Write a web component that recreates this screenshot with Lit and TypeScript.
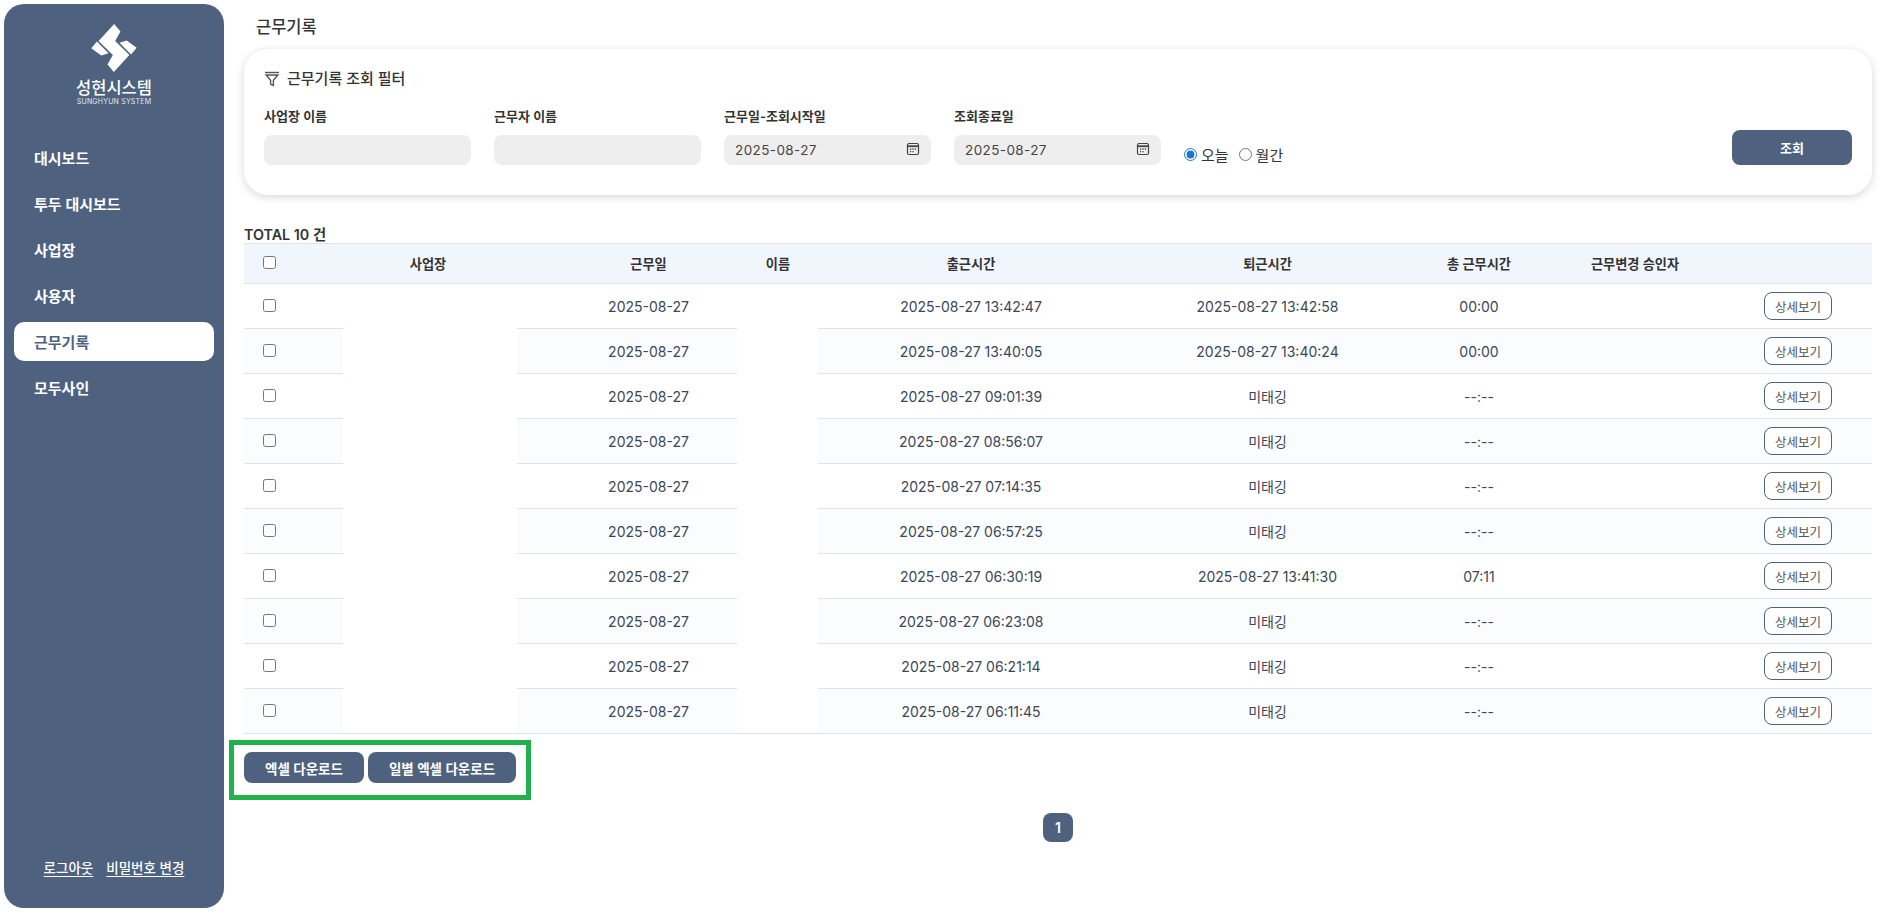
import { LitElement, html, css, svg } from "lit";
import { customElement } from "lit/decorators.js";

const NAV = ["대시보드", "투두 대시보드", "사업장", "사용자", "근무기록", "모두사인"];

// 근무일, 출근시간, 퇴근시간, 총 근무시간
const ROWS = [
  ["2025-08-27", "2025-08-27 13:42:47", "2025-08-27 13:42:58", "00:00"],
  ["2025-08-27", "2025-08-27 13:40:05", "2025-08-27 13:40:24", "00:00"],
  ["2025-08-27", "2025-08-27 09:01:39", "미태깅", "--:--"],
  ["2025-08-27", "2025-08-27 08:56:07", "미태깅", "--:--"],
  ["2025-08-27", "2025-08-27 07:14:35", "미태깅", "--:--"],
  ["2025-08-27", "2025-08-27 06:57:25", "미태깅", "--:--"],
  ["2025-08-27", "2025-08-27 06:30:19", "2025-08-27 13:41:30", "07:11"],
  ["2025-08-27", "2025-08-27 06:23:08", "미태깅", "--:--"],
  ["2025-08-27", "2025-08-27 06:21:14", "미태깅", "--:--"],
  ["2025-08-27", "2025-08-27 06:11:45", "미태깅", "--:--"],
];

const logoMark = svg`<svg class="mark" viewBox="273 72 137 145" width="46" height="48" fill="#fff">
  <path d="M342 72 L361 95 L345 123 L388 166 L341 217 L322 194 L338 166 L295 123 Z"/>
  <path d="M273 145 L290 125 L325 160 L303 167 Z"/>
  <path d="M410 144 L393 164 L358 129 L380 122 Z"/>
</svg>`;

const filterIcon = svg`<svg viewBox="0 0 16 16" width="16" height="16" fill="none" stroke="#555" stroke-width="1.4">
  <path d="M1 1.5h14"/><path d="M2.2 4h11.6L9.4 9.2v5.3l-2.8-1.2V9.2z"/>
</svg>`;

const calendarIcon = svg`<svg viewBox="0 0 14 14" width="14" height="14" fill="none" stroke="#444" stroke-width="1.2">
  <rect x="1.5" y="1.5" width="11" height="11" rx="1.5"/><path d="M1.5 4.2h11" stroke-width="1.8"/>
  <path d="M4 7h1.2M6.4 7h1.2M8.8 7H10M4 9.6h1.2M6.4 9.6h1.2" stroke-width="1.3"/>
</svg>`;

@customElement("app-root")
export class AppRoot extends LitElement {
  static styles = css`
    :host {
      display: block;
      font-family: Inter, "Noto Sans CJK KR", sans-serif;
      color: #333;
    }
    * {
      box-sizing: border-box;
    }
    .page {
      display: flex;
      height: 914px;
      padding: 4px 29px 6px 4px;
      gap: 20px;
      overflow: hidden;
    }

    .sidebar {
      width: 220px;
      flex: none;
      display: flex;
      flex-direction: column;
      background: #4e6280;
      border-radius: 20px;
      color: #fff;
    }
    .logo {
      display: flex;
      flex-direction: column;
      align-items: center;
      padding-top: 20px;
      height: 134px;
    }
    .logo-ko {
      font-size: 16.5px;
      font-weight: 500;
      line-height: 20px;
      margin-top: 6px;
    }
    .logo-en {
      font-size: 7px;
      line-height: 8px;
      letter-spacing: 0.2px;
      opacity: 0.85;
    }
    .nav {
      display: flex;
      flex-direction: column;
      gap: 7px;
      padding: 0 10px;
    }
    .nav-item {
      height: 39px;
      display: flex;
      align-items: center;
      padding-left: 20px;
      border-radius: 10px;
      font-size: 15px;
      font-weight: 600;
    }
    .nav-item.active {
      background: #fff;
      color: #4e6280;
    }
    .side-links {
      margin-top: auto;
      display: flex;
      justify-content: center;
      gap: 13px;
      padding-bottom: 31px;
      font-size: 13.5px;
      font-weight: 500;
      text-decoration: underline;
      text-underline-offset: 3px;
    }

    .main {
      flex: 1;
      min-width: 0;
    }
    .title {
      font-size: 16.5px;
      font-weight: 500;
      line-height: 20px;
      margin: 13px 0 12px 12px;
    }
    .card {
      height: 146px;
      padding: 20px 20px 30px;
      border-radius: 24px;
      background: #fff;
      box-shadow: 0 2px 8px rgba(0, 0, 0, 0.16);
    }
    .card-title {
      display: flex;
      align-items: center;
      gap: 7px;
      font-size: 15px;
      font-weight: 500;
      line-height: 20px;
      margin-bottom: 18px;
    }
    .filters {
      display: flex;
      align-items: flex-end;
      gap: 23px;
    }
    .field {
      width: 207px;
      display: flex;
      flex-direction: column;
      gap: 10px;
    }
    .field label {
      font-size: 13px;
      font-weight: 600;
      line-height: 18px;
    }
    .input {
      height: 30px;
      border-radius: 8px;
      background: #eee;
      display: flex;
      align-items: center;
      justify-content: space-between;
      padding: 0 11px;
      font-size: 13.5px;
      letter-spacing: 0.4px;
      color: #444;
    }
    .input svg {
      margin-top: -2px;
    }
    .radios {
      display: flex;
      align-items: center;
      gap: 10px;
      font-size: 15px;
      height: 20px;
      position: relative;
      top: -1px;
    }
    .radios label {
      display: flex;
      align-items: center;
      gap: 4px;
    }
    .radios input {
      margin: 0;
      width: 13px;
      height: 13px;
      accent-color: #1976d2;
    }
    .search {
      margin-left: auto;
      width: 120px;
      height: 35px;
      border: 0;
      border-radius: 8px;
      background: #4e6280;
      color: #fff;
      font: 600 13px Inter, "Noto Sans CJK KR", sans-serif;
    }

    .total {
      margin-top: 31px;
      font-size: 14.3px;
      font-weight: 600;
      line-height: 17px;
    }
    .row {
      display: grid;
      grid-template-columns: 52px 264px 177px 82px 304px 289px 134px 178px 148px;
      align-items: center;
      height: 45px;
      border-bottom: 1px solid #e0e3e7;
      font-size: 14px;
      text-align: center;
      color: #3c4654;
    }
    .row.head {
      height: 41px;
      border-top: 1px solid #e0e3e7;
      background: #f1f6fd;
      font-size: 13.2px;
      font-weight: 600;
      color: #333;
    }
    .row.even {
      background: #fbfcfe;
    }
    .row input {
      display: block;
      margin: 0 0 2px 19px;
      width: 13px;
      height: 13px;
    }
    .rows {
      position: relative;
    }
    /* blanked-out personal data in the reference */
    .mask {
      position: absolute;
      top: 0;
      bottom: 1px;
      background: #fff;
    }
    .mask.site {
      left: 99px;
      width: 174px;
    }
    .mask.person {
      left: 493px;
      width: 81px;
    }
    .detail {
      display: block;
      margin: 0 auto;
      width: 68px;
      height: 28px;
      border: 1px solid #4e6280;
      border-radius: 8px;
      background: #fff;
      color: #555;
      font: 400 12.5px Inter, "Noto Sans CJK KR", sans-serif;
      padding: 0;
    }

    .downloads {
      display: inline-flex;
      gap: 4px;
      margin: 6px 0 0 -15px;
      padding: 7px 10px 12px;
      border: 5px solid #22b14c;
    }
    .downloads button {
      height: 31px;
      border: 0;
      border-radius: 8px;
      background: #4e6280;
      color: #fff;
      font: 600 13.5px Inter, "Noto Sans CJK KR", sans-serif;
      padding: 0;
    }
    .dl-month {
      width: 120px;
    }
    .dl-day {
      width: 148px;
    }
    .pager {
      display: flex;
      justify-content: center;
      margin-top: 13px;
    }
    .pager span {
      width: 30px;
      height: 29px;
      display: flex;
      align-items: center;
      justify-content: center;
      border-radius: 8px;
      background: #4e6280;
      color: #fff;
      font-size: 14px;
      font-weight: 600;
    }
  `;

  render() {
    return html`
      <div class="page">
        <aside class="sidebar">
          <div class="logo">
            ${logoMark}
            <div class="logo-ko">성현시스템</div>
            <div class="logo-en">SUNGHYUN SYSTEM</div>
          </div>
          <nav class="nav">
            ${NAV.map(
              (n) => html`<div class="nav-item ${n === "근무기록" ? "active" : ""}">${n}</div>`
            )}
          </nav>
          <div class="side-links"><span>로그아웃</span><span>비밀번호 변경</span></div>
        </aside>

        <main class="main">
          <div class="title">근무기록</div>
          <section class="card">
            <div class="card-title">${filterIcon}<span>근무기록 조회 필터</span></div>
            <div class="filters">
              <div class="field"><label>사업장 이름</label><div class="input"></div></div>
              <div class="field"><label>근무자 이름</label><div class="input"></div></div>
              <div class="field">
                <label>근무일-조회시작일</label>
                <div class="input"><span>2025-08-27</span>${calendarIcon}</div>
              </div>
              <div class="field">
                <label>조회종료일</label>
                <div class="input"><span>2025-08-27</span>${calendarIcon}</div>
              </div>
              <div class="radios">
                <label><input type="radio" name="range" checked />오늘</label>
                <label><input type="radio" name="range" />월간</label>
              </div>
              <button class="search">조회</button>
            </div>
          </section>

          <div class="total">TOTAL 10 건</div>
          <div class="row head">
            <div><input type="checkbox" /></div>
            <div>사업장</div>
            <div>근무일</div>
            <div>이름</div>
            <div>출근시간</div>
            <div>퇴근시간</div>
            <div>총 근무시간</div>
            <div>근무변경 승인자</div>
            <div></div>
          </div>
          <div class="rows">
            ${ROWS.map(
              (r, i) => html`
                <div class="row ${i % 2 ? "even" : ""}">
                  <div><input type="checkbox" /></div>
                  <div></div>
                  <div>${r[0]}</div>
                  <div></div>
                  <div>${r[1]}</div>
                  <div>${r[2]}</div>
                  <div>${r[3]}</div>
                  <div></div>
                  <div><button class="detail">상세보기</button></div>
                </div>
              `
            )}
            <div class="mask site"></div>
            <div class="mask person"></div>
          </div>

          <div class="downloads">
            <button class="dl-month">엑셀 다운로드</button>
            <button class="dl-day">일별 엑셀 다운로드</button>
          </div>
          <div class="pager"><span>1</span></div>
        </main>
      </div>
    `;
  }
}
